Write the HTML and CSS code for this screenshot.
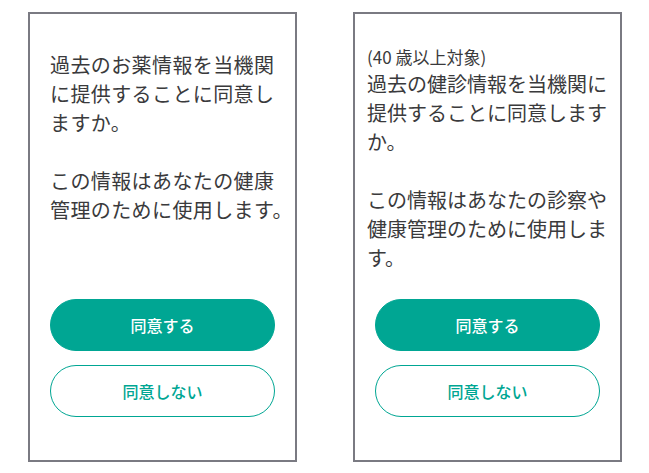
FILE: index.html
```html
<!DOCTYPE html>
<html lang="ja">
<head>
<meta charset="utf-8">
<title>同意確認</title>
<link rel="stylesheet" href="styles.css">
</head>
<body>
<main class="screens">
  <section class="card card--meds">
    <div class="message">
      <p class="para">過去のお薬情報を当機関に提供することに同意しますか。</p>
      <p class="para">この情報はあなたの健康<span class="keep">管理のために使用します。</span></p>
    </div>
    <div class="actions">
      <button class="btn btn--primary" type="button">同意する</button>
      <button class="btn btn--outline" type="button">同意しない</button>
    </div>
  </section>
  <section class="card card--checkup">
    <div class="message">
      <p class="note">(40 歳以上対象)</p>
      <p class="para">過去の健診情報を当機関に提供することに同意しますか。</p>
      <p class="para">この情報はあなたの診察や健康管理のために使用します。</p>
    </div>
    <div class="actions">
      <button class="btn btn--primary" type="button">同意する</button>
      <button class="btn btn--outline" type="button">同意しない</button>
    </div>
  </section>
</main>
</body>
</html>
```
FILE: styles.css
```css
* { box-sizing: border-box; }

html, body {
  margin: 0;
  padding: 0;
  background: #ffffff;
}

body {
  font-family: "Noto Sans CJK JP", "Noto Sans", sans-serif;
  color: #3a3a3c;
}

.screens {
  display: flex;
  gap: 56px;
  padding: 12px 0 0 28px;
}

.card {
  width: 269px;
  height: 450px;
  border: 2px solid #7a7a82;
  display: flex;
  flex-direction: column;
  padding: 0 20px 43px;
}

.message {
  font-size: 20px;
  line-height: 29px;
}

.card--meds .message {
  padding-top: 36px;
  margin-right: -9px;
  letter-spacing: 0.4px;
}

.card--checkup .message {
  padding-top: 31px;
  margin-left: -8px;
  margin-right: -11px;
}

.para {
  margin: 0 0 29px;
}

.para:last-child {
  margin-bottom: 0;
}

.keep {
  display: inline-block;
  white-space: nowrap;
}

.note {
  margin: 0;
  font-size: 17px;
  line-height: 24px;
}

.actions {
  margin-top: auto;
  display: flex;
  flex-direction: column;
  gap: 14px;
}

.btn {
  display: flex;
  align-items: center;
  justify-content: center;
  width: 225px;
  height: 52px;
  border-radius: 26px;
  font-family: "Noto Sans CJK JP", "Noto Sans", sans-serif;
  font-size: 16px;
  font-weight: 500;
  cursor: pointer;
  padding: 0;
}

.btn--primary {
  background: #00a693;
  border: 1.5px solid #00a693;
  color: #ffffff;
}

.btn--outline {
  background: #ffffff;
  border: 1.5px solid #00a693;
  color: #00a693;
}
```
